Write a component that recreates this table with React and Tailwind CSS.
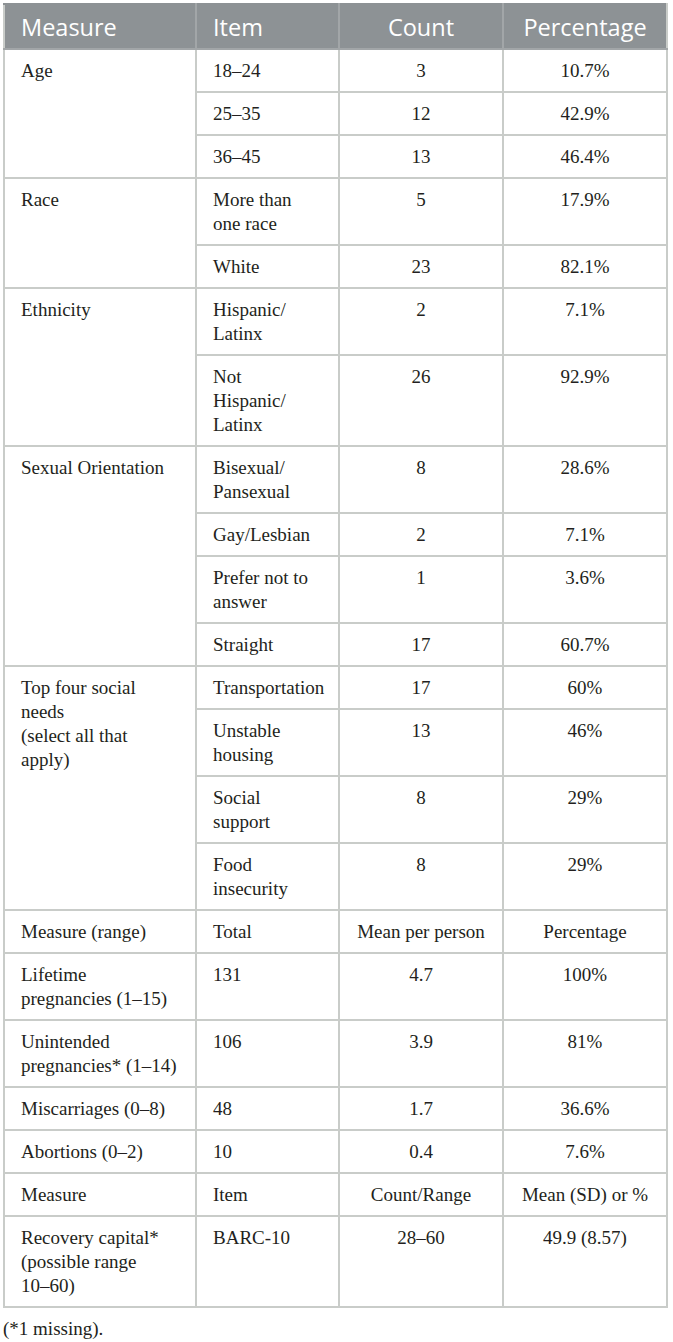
import React from 'react'

const groups = [
  { measure: ['Age'], rows: [[['18–24'], '3', '10.7%'], [['25–35'], '12', '42.9%'], [['36–45'], '13', '46.4%']] },
  { measure: ['Race'], rows: [[['More than', 'one race'], '5', '17.9%'], [['White'], '23', '82.1%']] },
  { measure: ['Ethnicity'], rows: [[['Hispanic/', 'Latinx'], '2', '7.1%'], [['Not', 'Hispanic/', 'Latinx'], '26', '92.9%']] },
  {
    measure: ['Sexual Orientation'],
    rows: [
      [['Bisexual/', 'Pansexual'], '8', '28.6%'],
      [['Gay/Lesbian'], '2', '7.1%'],
      [['Prefer not to', 'answer'], '1', '3.6%'],
      [['Straight'], '17', '60.7%'],
    ],
  },
  {
    measure: ['Top four social', 'needs', '(select all that', 'apply)'],
    rows: [
      [['Transportation'], '17', '60%'],
      [['Unstable', 'housing'], '13', '46%'],
      [['Social', 'support'], '8', '29%'],
      [['Food', 'insecurity'], '8', '29%'],
    ],
  },
]

const plain = [
  [['Measure (range)'], ['Total'], 'Mean per person', 'Percentage'],
  [['Lifetime', 'pregnancies (1–15)'], ['131'], '4.7', '100%'],
  [['Unintended', 'pregnancies* (1–14)'], ['106'], '3.9', '81%'],
  [['Miscarriages (0–8)'], ['48'], '1.7', '36.6%'],
  [['Abortions (0–2)'], ['10'], '0.4', '7.6%'],
  [['Measure'], ['Item'], 'Count/Range', 'Mean (SD) or %'],
  [['Recovery capital*', '(possible range', '10–60)'], ['BARC-10'], '28–60', '49.9 (8.57)'],
]

const Lines = ({ lines }) =>
  lines.map((l, i) => (
    <React.Fragment key={i}>
      {i > 0 && <br />}
      {l}
    </React.Fragment>
  ))

const td = 'border-2 border-[#c9ccc9] align-top px-4 pt-[9px] pb-[8px] whitespace-nowrap'
const th = 'border-2 border-[#a2a6a8] border-t-[#8d9295] font-normal px-4'

export default function App() {
  return (
    <div className="bg-white min-h-screen pt-[3px] px-[3px] font-['Liberation_Serif',serif] text-[19px] leading-[24px] text-[#231f20]">
      <table className="w-[665px] border-collapse table-fixed">
        <colgroup>
          <col className="w-[192px]" />
          <col className="w-[143px]" />
          <col className="w-[164px]" />
          <col />
        </colgroup>
        <thead>
          <tr className="bg-[#8d9295] text-white font-['Open_Sans',sans-serif] text-[23.5px] h-[45px]">
            <th className={th + ' border-l-[#c9ccc9] text-left'}>Measure</th>
            <th className={th + ' text-left'}>Item</th>
            <th className={th + ' text-center'}>Count</th>
            <th className={th + ' border-r-[#c9ccc9] text-center'}>Percentage</th>
          </tr>
        </thead>
        <tbody>
          {groups.map((g, gi) =>
            g.rows.map((r, ri) => (
              <tr key={gi + '-' + ri}>
                {ri === 0 && (
                  <td rowSpan={g.rows.length} className={td}>
                    <Lines lines={g.measure} />
                  </td>
                )}
                <td className={td}>
                  <Lines lines={r[0]} />
                </td>
                <td className={td + ' text-center'}>{r[1]}</td>
                <td className={td + ' text-center'}>{r[2]}</td>
              </tr>
            ))
          )}
          {plain.map((r, i) => (
            <tr key={'p' + i}>
              <td className={td}>
                <Lines lines={r[0]} />
              </td>
              <td className={td}>
                <Lines lines={r[1]} />
              </td>
              <td className={td + ' text-center'}>{r[2]}</td>
              <td className={td + ' text-center'}>{r[3]}</td>
            </tr>
          ))}
        </tbody>
      </table>
      <p className="mt-[9px]">(*1 missing).</p>
    </div>
  )
}
